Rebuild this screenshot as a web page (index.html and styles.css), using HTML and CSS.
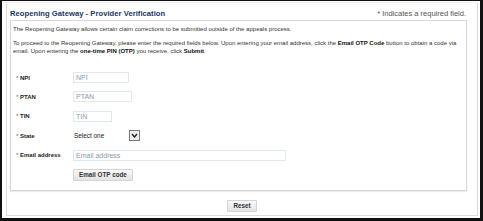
FILE: index.html
```html
<!DOCTYPE html>
<html lang="en">
<head>
    <meta charset="UTF-8">
    <title>Reopening Gateway - Provider Verification</title>
    <link rel="stylesheet" href="styles.css">
</head>
<body>
    <div class="frame">
        <div class="panel">
            <div class="panel-head">
                <h1>Reopening Gateway - Provider Verification</h1>
                <span class="req-note">* Indicates a required field.</span>
            </div>
            <div class="box">
                <p class="intro">The Reopening Gateway allows certain claim corrections to be submitted outside of the appeals process.</p>
                <p class="intro">To proceed to the Reopening Gateway, please enter the required fields below. Upon entering your email address, click the <b>Email OTP Code</b> button to obtain a code via email. Upon entering the <b>one-time PIN (OTP)</b> you receive, click <b>Submit</b>.</p>

                <div class="form">
                    <div class="form-row">
                        <label for="npi"><span class="star">*</span> NPI</label>
                        <input type="text" id="npi" class="field w-npi" placeholder="NPI">
                    </div>
                    <div class="form-row">
                        <label for="ptan"><span class="star">*</span> PTAN</label>
                        <input type="text" id="ptan" class="field w-ptan" placeholder="PTAN">
                    </div>
                    <div class="form-row">
                        <label for="tin"><span class="star">*</span> TIN</label>
                        <input type="text" id="tin" class="field w-tin" placeholder="TIN">
                    </div>
                    <div class="form-row">
                        <label for="state"><span class="star">*</span> State</label>
                        <div class="select" id="state">
                            <span class="select-text">Select one</span>
                            <span class="select-arrow">
                                <svg width="7" height="5" viewBox="0 0 7 5"><path d="M1 1 L3.5 4 L6 1" fill="none" stroke="#222" stroke-width="1.4"/></svg>
                            </span>
                        </div>
                    </div>
                    <div class="form-row">
                        <label for="email"><span class="star">*</span> Email address</label>
                        <input type="text" id="email" class="field w-email" placeholder="Email address">
                    </div>
                    <div class="form-row">
                        <span class="spacer"></span>
                        <button class="btn">Email OTP code</button>
                    </div>
                </div>
            </div>
            <div class="actions">
                <button class="btn">Reset</button>
            </div>
        </div>
    </div>
</body>
</html>
```

FILE: styles.css
```css
html, body {
    margin: 0;
    padding: 0;
    background: #fff;
}
body {
    font-family: "Liberation Sans", Arial, sans-serif;
    color: #222;
}
.frame {
    width: 483px;
    height: 221px;
    box-sizing: border-box;
    border-style: solid;
    border-color: #111;
    border-width: 1px 3px 3px 2px;
    padding: 1px 2px 2px 4px;
}
.panel {
    height: 100%;
    box-sizing: border-box;
    border: 1px solid #dcdcdc;
    border-top-color: #f0f0f0;
    padding: 0 10px 0 3px;
    display: flex;
    flex-direction: column;
}
.panel-head {
    display: flex;
    justify-content: space-between;
    align-items: center;
    height: 17px;
    padding-top: 3px;
    box-sizing: border-box;
}
h1 {
    margin: 0;
    font-size: 7.6px;
    font-weight: bold;
    color: #1c3760;
    letter-spacing: 0.05px;
}
.req-note {
    font-size: 7.5px;
    color: #555;
    padding-right: 1px;
}
.box {
    border: 1px solid #d8d8d8;
    box-shadow: 0 1px 1px #ececec;
    padding: 4px 4px 9px 2px;
}
.intro {
    margin: 0 0 6px;
    font-size: 6px;
    line-height: 8px;
    color: #333;
}
.intro b {
    color: #111;
}
.form {
    margin-top: 17px;
}
.form-row {
    display: flex;
    align-items: center;
    height: 11px;
    margin-bottom: 8.4px;
}
.form-row:last-child {
    height: 12px;
    margin-bottom: 0;
}
.form-row label, .spacer {
    width: 60px;
    flex: none;
    padding-left: 3px;
    box-sizing: border-box;
    font-size: 6px;
    font-weight: bold;
    color: #222;
}
.star {
    color: #4a6a8a;
    font-weight: normal;
}
.field {
    height: 11px;
    box-sizing: border-box;
    border: 1px solid #dfe8ef;
    padding: 0 2px;
    font-family: "Liberation Sans", Arial, sans-serif;
    font-size: 7px;
    color: #333;
    outline: none;
}
.field::placeholder {
    color: #8a9aad;
}
.w-npi { width: 56px; }
.w-ptan { width: 59px; }
.w-tin { width: 39px; }
.w-email { width: 213px; }
.select {
    width: 67px;
    height: 11px;
    display: flex;
    align-items: center;
    justify-content: space-between;
    font-size: 6.4px;
    color: #222;
    padding-left: 1px;
    box-sizing: border-box;
}
.select-arrow {
    width: 9px;
    height: 9px;
    border: 1px solid #777;
    background: #eee;
    display: flex;
    align-items: center;
    justify-content: center;
}
.btn {
    height: 12px;
    padding: 0 5px;
    border: 1px solid #d4d4d4;
    border-radius: 1px;
    background: linear-gradient(#f8f8f8, #e4e4e4);
    font-family: "Liberation Sans", Arial, sans-serif;
    font-size: 6.3px;
    font-weight: bold;
    color: #333;
    cursor: pointer;
}
.actions {
    display: flex;
    justify-content: center;
    margin-top: 9px;
    padding-left: 7px;
}
```
